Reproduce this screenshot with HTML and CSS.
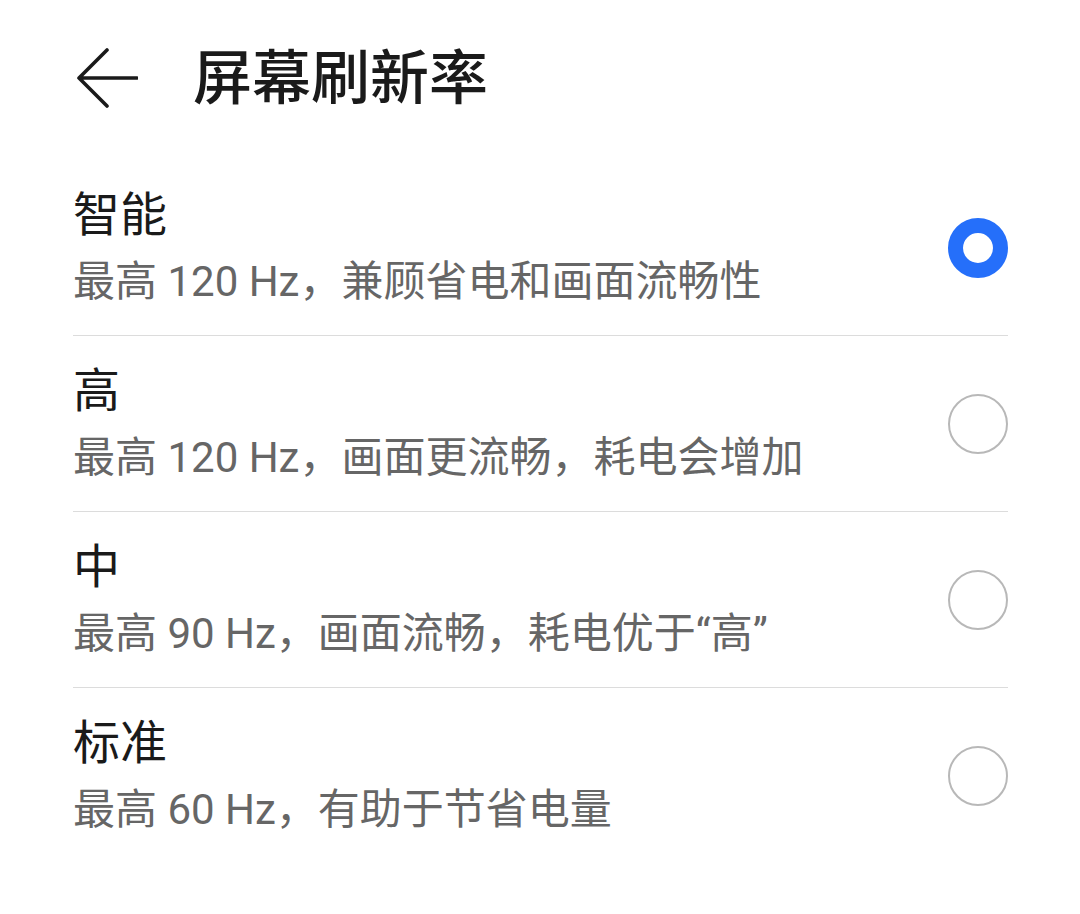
FILE: index.html
```html
<!DOCTYPE html>
<html lang="zh-CN">
<head>
    <meta charset="UTF-8">
    <meta name="viewport" content="width=device-width, initial-scale=1.0">
    <title>屏幕刷新率</title>
    <link rel="stylesheet" href="styles.css">
</head>
<body>
    <header class="app-bar">
        <button class="back-button" aria-label="返回">
            <svg width="64" height="64" viewBox="0 0 64 64">
                <path d="M33 9 L5 37 L33 65 M5 37 H63" fill="none" stroke="#1a1a1a" stroke-width="3.6" stroke-linecap="round" stroke-linejoin="round" transform="translate(0,-5)"/>
            </svg>
        </button>
        <h1 class="app-title">屏幕刷新率</h1>
    </header>

    <ul class="option-list">
        <li class="option-row">
            <div class="option-text">
                <div class="option-title">智能</div>
                <div class="option-desc">最高 120 Hz，兼顾省电和画面流畅性</div>
            </div>
            <span class="radio checked"></span>
        </li>
        <li class="option-row">
            <div class="option-text">
                <div class="option-title">高</div>
                <div class="option-desc">最高 120 Hz，画面更流畅，耗电会增加</div>
            </div>
            <span class="radio"></span>
        </li>
        <li class="option-row">
            <div class="option-text">
                <div class="option-title">中</div>
                <div class="option-desc">最高 90 Hz，画面流畅，耗电优于“高”</div>
            </div>
            <span class="radio"></span>
        </li>
        <li class="option-row">
            <div class="option-text">
                <div class="option-title">标准</div>
                <div class="option-desc">最高 60 Hz，有助于节省电量</div>
            </div>
            <span class="radio"></span>
        </li>
    </ul>
</body>
</html>
```

FILE: styles.css
```css
/* Page */
body {
    margin: 0;
    background-color: #ffffff;
    font-family: Roboto, "Noto Sans CJK SC", sans-serif;
    color: #1a1a1a;
}

/* Top bar */
.app-bar {
    display: flex;
    align-items: center;
    height: 156px;
    padding-left: 74px;
    box-sizing: border-box;
}

.back-button {
    width: 64px;
    height: 64px;
    padding: 0;
    border: none;
    background: none;
    margin-right: 55px;
}

.back-button svg {
    display: block;
}

.app-title {
    margin: 0;
    font-size: 59px;
    font-weight: 500;
    line-height: 1;
    color: #1a1a1a;
}

/* Options */
.option-list {
    list-style: none;
    margin: 0;
    padding: 4px 72px 0 73px;
}

.option-row {
    display: flex;
    align-items: center;
    justify-content: space-between;
    height: 176px;
    box-sizing: border-box;
    border-bottom: 1px solid #dcdcdc;
}

.option-row:last-child {
    border-bottom: none;
}

.option-title {
    font-size: 47px;
    line-height: 60px;
    font-weight: 400;
    color: #1a1a1a;
}

.option-desc {
    margin-top: 8px;
    font-size: 42px;
    line-height: 58px;
    color: #666666;
}

/* Radio circles */
.radio {
    width: 60px;
    height: 60px;
    box-sizing: border-box;
    border-radius: 50%;
    border: 2.5px solid #b8b8b8;
    flex-shrink: 0;
}

.radio.checked {
    border: 15px solid #256ffa;
}
```
